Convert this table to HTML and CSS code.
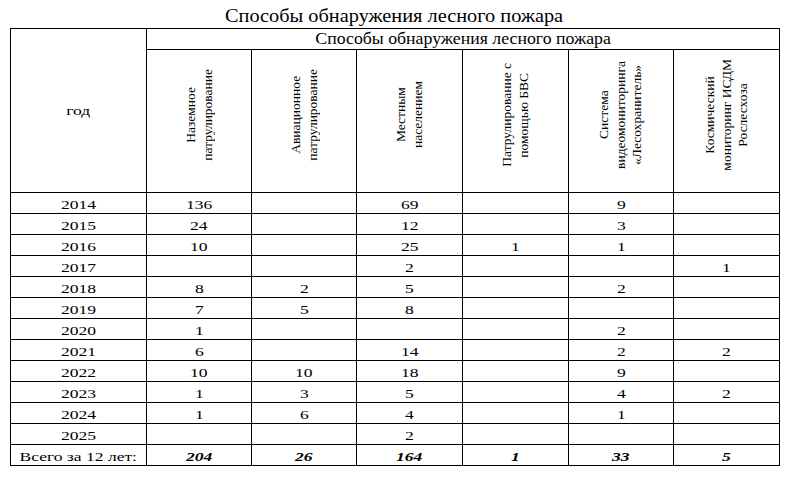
FILE: index.html
```html
<!DOCTYPE html>
<html lang="ru">
<head>
<meta charset="utf-8">
<title>Способы обнаружения лесного пожара</title>
<link rel="stylesheet" href="styles.css">
</head>
<body>
<div class="title"><span class="sx sx-title">Способы обнаружения лесного пожара</span></div>
<table class="grid">
  <colgroup>
    <col class="c-year">
    <col class="c1"><col class="c2"><col class="c3"><col class="c4"><col class="c5"><col class="c6">
  </colgroup>
  <thead>
    <tr class="h1">
      <th class="year" rowspan="2"><span class="sx">год</span></th>
      <th class="group" colspan="6"><span class="sx sx-head">Способы обнаружения лесного пожара</span></th>
    </tr>
    <tr class="h2">
      <th><div class="vt">Наземное<br>патрулирование</div></th>
      <th><div class="vt">Авиационное<br>патрулирование</div></th>
      <th><div class="vt">Местным<br>населением</div></th>
      <th><div class="vt">Патрулирование с<br>помощью БВС</div></th>
      <th><div class="vt">Система<br>видеомониторинга<br>«Лесохранитель»</div></th>
      <th><div class="vt">Космический<br>мониторинг ИСДМ<br>Рослесхоза</div></th>
    </tr>
  </thead>
  <tbody>
    <tr><td><span class="sx">2014</span></td><td><span class="sx">136</span></td><td></td><td><span class="sx">69</span></td><td></td><td><span class="sx">9</span></td><td></td></tr>
    <tr><td><span class="sx">2015</span></td><td><span class="sx">24</span></td><td></td><td><span class="sx">12</span></td><td></td><td><span class="sx">3</span></td><td></td></tr>
    <tr><td><span class="sx">2016</span></td><td><span class="sx">10</span></td><td></td><td><span class="sx">25</span></td><td><span class="sx">1</span></td><td><span class="sx">1</span></td><td></td></tr>
    <tr><td><span class="sx">2017</span></td><td></td><td></td><td><span class="sx">2</span></td><td></td><td></td><td><span class="sx">1</span></td></tr>
    <tr><td><span class="sx">2018</span></td><td><span class="sx">8</span></td><td><span class="sx">2</span></td><td><span class="sx">5</span></td><td></td><td><span class="sx">2</span></td><td></td></tr>
    <tr><td><span class="sx">2019</span></td><td><span class="sx">7</span></td><td><span class="sx">5</span></td><td><span class="sx">8</span></td><td></td><td></td><td></td></tr>
    <tr><td><span class="sx">2020</span></td><td><span class="sx">1</span></td><td></td><td></td><td></td><td><span class="sx">2</span></td><td></td></tr>
    <tr><td><span class="sx">2021</span></td><td><span class="sx">6</span></td><td></td><td><span class="sx">14</span></td><td></td><td><span class="sx">2</span></td><td><span class="sx">2</span></td></tr>
    <tr><td><span class="sx">2022</span></td><td><span class="sx">10</span></td><td><span class="sx">10</span></td><td><span class="sx">18</span></td><td></td><td><span class="sx">9</span></td><td></td></tr>
    <tr><td><span class="sx">2023</span></td><td><span class="sx">1</span></td><td><span class="sx">3</span></td><td><span class="sx">5</span></td><td></td><td><span class="sx">4</span></td><td><span class="sx">2</span></td></tr>
    <tr><td><span class="sx">2024</span></td><td><span class="sx">1</span></td><td><span class="sx">6</span></td><td><span class="sx">4</span></td><td></td><td><span class="sx">1</span></td><td></td></tr>
    <tr><td><span class="sx">2025</span></td><td></td><td></td><td><span class="sx">2</span></td><td></td><td></td><td></td></tr>
    <tr class="total"><td><span class="sx">Всего за 12 лет:</span></td><td class="bi"><span class="sx">204</span></td><td class="bi"><span class="sx">26</span></td><td class="bi"><span class="sx">164</span></td><td class="bi"><span class="sx">1</span></td><td class="bi"><span class="sx">33</span></td><td class="bi"><span class="sx">5</span></td></tr>
  </tbody>
</table>
</body>
</html>
```

FILE: styles.css
```css
html, body {
  margin: 0;
  padding: 0;
  background: #fff;
}
body {
  width: 789px;
  font-family: "Liberation Serif", "Times New Roman", serif;
  color: #000;
}
.sx {
  display: inline-block;
  transform: scaleX(1.3);
  white-space: nowrap;
}
.sx-title {
  transform: scaleX(1.07);
}
.sx-head {
  transform: scaleX(1.11);
}
.title {
  height: 28px;
  box-sizing: border-box;
  padding-top: 4px;
  font-size: 19px;
  line-height: 24px;
  text-align: center;
}
.grid {
  margin-left: 10px;
  width: 769px;
  border-collapse: collapse;
  table-layout: fixed;
}
.c-year { width: 136px; }
.c1 { width: 105px; }
.c2 { width: 105px; }
.c3 { width: 106px; }
.c4 { width: 106px; }
.c5 { width: 105px; }
.c6 { width: 106px; }
.grid th,
.grid td {
  border: 1px solid #000;
  padding: 0;
  text-align: center;
  font-weight: normal;
}
.h1 th.group {
  font-size: 16px;
  line-height: 17px;
  padding: 1px 0 2px;
  height: 17px;
}
.h1 th.year {
  font-size: 13.5px;
  vertical-align: middle;
}
.h2 th {
  height: 134px;
  padding: 0 0 8px;
  vertical-align: middle;
}
.vt {
  display: inline-block;
  writing-mode: vertical-rl;
  transform: rotate(180deg);
  font-size: 13.5px;
  line-height: 16.5px;
  text-align: center;
  white-space: nowrap;
}
.grid td {
  font-size: 13.5px;
  line-height: 17px;
  height: 17px;
  padding: 3px 0 0;
}
.grid td.bi {
  font-weight: bold;
  font-style: italic;
}
```
